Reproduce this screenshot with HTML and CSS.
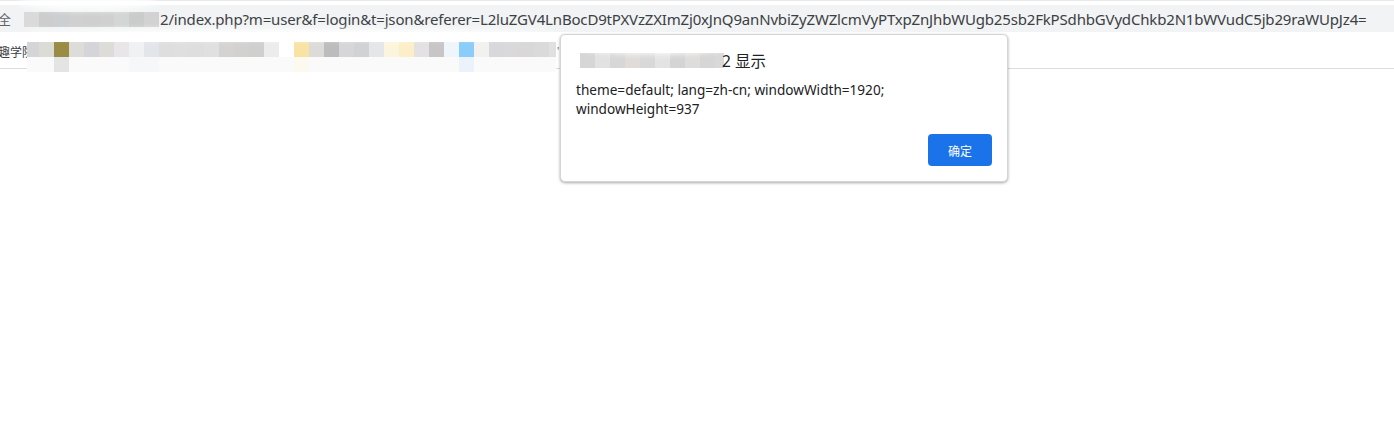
FILE: index.html
```html
<!DOCTYPE html>
<html lang="zh-CN">
<head>
<meta charset="utf-8">
<title>显示</title>
<link rel="stylesheet" href="styles.css">
</head>
<body>
<div class="browser">
  <div class="topstrip"></div>
  <div class="addressbar">
    <span class="addr-prefix">全</span>
    <span class="pix pix-host"></span>
    <span class="addr-url">2/index.php?m=user&amp;f=login&amp;t=json&amp;referer=L2luZGV4LnBocD9tPXVzZXImZj0xJnQ9anNvbiZyZWZlcmVyPTxpZnJhbWUgb25sb2FkPSdhbGVydChkb2N1bWVudC5jb29raWUpJz4=</span>
  </div>
  <div class="bookmarks">
    <span class="bm-label">趣学院</span>
    <span class="bm-pix">
      <span class="pix pix-row1"></span>
      <span class="pix pix-row2"></span>
    </span>
    <span class="bm-tick">'</span>
  </div>
  <div class="smudge smudge-addr"></div>
  <div class="smudge smudge-bm"></div>

  <div class="dialog" role="dialog">
    <div class="dialog-title">
      <span class="pix pix-title"></span><span class="title-text">2 显示</span>
    </div>
    <div class="smudge smudge-title"></div>
    <div class="dialog-body">theme=default; lang=zh-cn; windowWidth=1920;<br>windowHeight=937</div>
    <div class="dialog-actions">
      <button class="btn-ok">确定</button>
    </div>
  </div>
</div>
</body>
</html>
```
FILE: styles.css
```css
html, body {
  margin: 0;
  padding: 0;
  background: #ffffff;
}
body {
  width: 1394px;
  height: 439px;
  overflow: hidden;
  font-family: "Noto Sans", "Noto Sans CJK SC", sans-serif;
  color: #202124;
}
.browser {
  position: relative;
  width: 1394px;
  height: 439px;
}
.topstrip {
  height: 5px;
  background: #ffffff;
  border-top: 1px solid #e8e8e8;
  box-sizing: border-box;
}
.addressbar {
  height: 27px;
  background: #f1f3f4;
  display: flex;
  align-items: center;
  white-space: nowrap;
  overflow: hidden;
  font-size: 15px;
  color: #3c4043;
}
.addr-prefix {
  margin-left: -2px;
  width: 26px;
  font-size: 13px;
  color: #5f6368;
  font-family: "Noto Sans CJK SC", sans-serif;
}
.pix {
  display: block;
}
.pix-host {
  width: 135px;
  height: 15px;
  margin-top: 2px;
  background: linear-gradient(90deg,
    #dadada 0 15px, #cdcdcd 15px 30px, #cbcfd2 30px 45px, #d0d0d0 45px 60px,
    #cfcfcf 60px 75px, #d0d0d0 75px 90px, #d2d6d4 90px 105px, #cbcbcb 105px 120px,
    #d2d2d2 120px 135px);
}
.addr-url {
  margin-left: 1px;
  letter-spacing: -0.17px;
}
.bookmarks {
  height: 37px;
  border-bottom: 1px solid #dadce0;
  display: flex;
  align-items: flex-start;
  box-sizing: border-box;
}
.bm-label {
  margin-left: -2px;
  margin-top: 11px;
  width: 29px;
  overflow: hidden;
  white-space: nowrap;
  font-size: 12px;
  color: #3c4043;
  font-family: "Noto Sans CJK SC", sans-serif;
}
.bm-pix {
  display: flex;
  flex-direction: column;
  margin-top: 10px;
}
.pix-row1 {
  width: 529px;
  height: 15px;
  background: linear-gradient(90deg,
    #d4d5d8 0 12px, #dcdcd6 12px 27px, #9b8c45 27px 42px, #dedcd8 42px 57px,
    #d3d5d8 57px 72px, #dedcd8 72px 87px, #e9e6e9 87px 102px, #f0f1f3 102px 117px,
    #e2e6ea 117px 132px, #dedede 132px 147px, #dfdfdf 147px 162px, #dedede 162px 177px,
    #e0e0e0 177px 192px, #d5d2d2 192px 207px, #d2d1d0 207px 222px, #cfcfcf 222px 237px,
    #ececee 237px 252px, #ffffff 252px 267px, #f8e3a4 267px 282px, #dddbd8 282px 297px,
    #bdbcbd 297px 312px, #d6d6d8 312px 327px, #d1d2d4 327px 342px, #e5e6e8 342px 357px,
    #fcf5de 357px 372px, #fcefc8 372px 387px, #e3e1e3 387px 402px, #c7c5c6 402px 417px,
    #eef6fc 417px 432px, #8acdfa 432px 447px, #f2f1f0 447px 462px, #d8d8da 462px 477px,
    #d9d9db 477px 492px, #d9d7d8 492px 507px, #dadada 507px 522px, #e0e0e0 522px 529px);
}
.pix-row2 {
  width: 529px;
  height: 15px;
  background: linear-gradient(90deg,
    #fafafa 0 27px, #e4e4e4 27px 42px, #fafafa 42px 102px, #f6f7f8 102px 132px,
    #fafafa 132px 267px, #fcf9ef 267px 282px, #fafafa 282px 432px, #ebf2fc 432px 447px,
    #fafafa 447px 529px);
}
.bm-tick {
  margin-top: 12px;
  margin-left: 1px;
  font-size: 10px;
  color: #5f6368;
}
.smudge {
  position: absolute;
  background: #ffffff;
  border-radius: 50%;
  filter: blur(3px);
  pointer-events: none;
}
.smudge-addr {
  left: 18px;
  top: -6px;
  width: 140px;
  height: 16px;
  opacity: 0.85;
}
.smudge-bm {
  left: 26px;
  top: 29px;
  width: 530px;
  height: 10px;
  opacity: 0.9;
}
.dialog {
  position: absolute;
  left: 560px;
  top: 34px;
  width: 448px;
  height: 148px;
  box-sizing: border-box;
  background: #ffffff;
  border-radius: 5px;
  border: 1px solid #d6d6d6;
  box-shadow: 0 1px 3px rgba(0, 0, 0, 0.35);
  padding: 0 15px 0 15px;
  display: flex;
  flex-direction: column;
  overflow: hidden;
}
.dialog-title {
  display: flex;
  align-items: center;
  margin-top: 17px;
  height: 16px;
}
.pix-title {
  width: 144px;
  height: 15px;
  margin-left: 4px;
  background: linear-gradient(90deg,
    #d6d6d6 0 15px, #e2e2e2 15px 30px, #d7d7d7 30px 45px, #dfdcd9 45px 60px,
    #d8d8d8 60px 75px, #e3e3e3 75px 90px, #d4d4d4 90px 105px, #dedddb 105px 120px,
    #d6d6d6 120px 135px, #d9d9d9 135px 144px);
}
.title-text {
  font-size: 15.5px;
  color: #202124;
  white-space: nowrap;
  margin-left: -2px;
  font-family: "Noto Sans", "Noto Sans CJK SC", sans-serif;
}
.smudge-title {
  left: 6px;
  top: -3px;
  width: 175px;
  height: 22px;
  opacity: 0.9;
}
.dialog-body {
  margin-top: 12px;
  font-size: 13.6px;
  line-height: 19px;
  color: #202124;
}
.dialog-actions {
  display: flex;
  justify-content: flex-end;
  margin-top: 16px;
}
.btn-ok {
  width: 64px;
  height: 32px;
  border: none;
  border-radius: 4px;
  background: #1a73e8;
  color: #ffffff;
  font-size: 12px;
  font-family: "Noto Sans CJK SC", sans-serif;
  padding: 0;
}
```
